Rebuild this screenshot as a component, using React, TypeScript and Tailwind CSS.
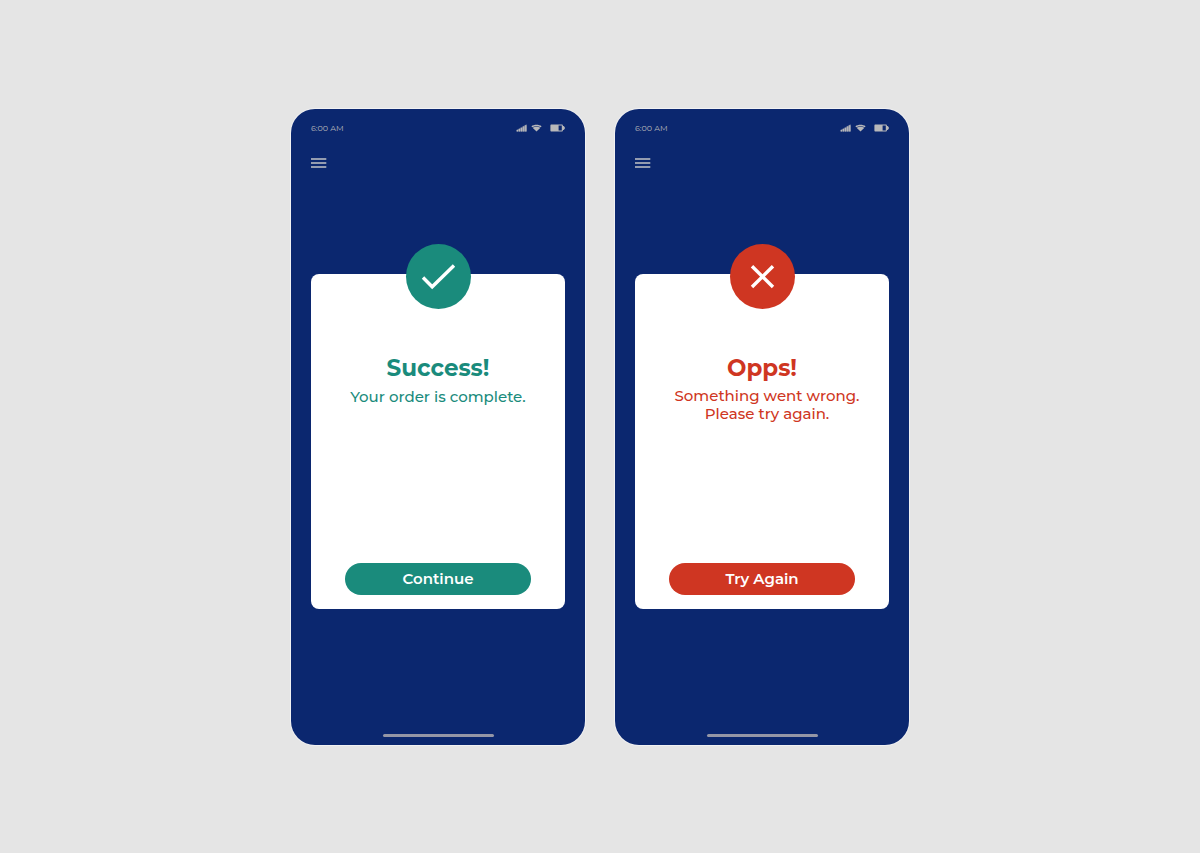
import type { ReactNode } from "react";

type Screen = {
  title: string;
  lines: string[];
  action: string;
  fill: string;
  text: string;
  note: string;
  icon: ReactNode;
};

const screens: Screen[] = [
  {
    title: "Success!",
    lines: ["Your order is complete."],
    action: "Continue",
    fill: "bg-[#1a8b7c]",
    text: "text-[#1a8b7c]",
    note: "leading-5",
    icon: <path d="M17 33.5 L26.2 42.8 L48 21.5" />,
  },
  {
    title: "Opps!",
    lines: ["Something went wrong.", "Please try again."],
    action: "Try Again",
    fill: "bg-[#cf3622]",
    text: "text-[#cf3622]",
    note: "leading-[18px] pl-[10px]",
    icon: <path d="M22 22.3 L43 43 M43 22.3 L22 43" />,
  },
];

function StatusBar() {
  return (
    <div className="flex h-4 items-center justify-between text-[#b8b8ba]">
      <span className="text-[8px] leading-4">6:00 AM</span>
      <div className="flex items-center">
        <svg width="11" height="8" viewBox="0 0 11 8" className="mr-1" fill="currentColor">
          <path d="M0.4 7.5 V6 L10.6 0.2 V7.5 Z" opacity="0.6" />
          <path d="M0.8 6h1.3v1.5H0.8z M2.9 5h1.3v2.5H2.9z M5 3.9h1.3v3.6H5z M7.1 2.6h1.3v4.9H7.1z M9.1 1.2h1.4v6.3H9.1z" />
        </svg>
        <svg width="11" height="8" viewBox="0 0 11 8" className="mr-2" fill="currentColor">
          <path d="M0.4 2.3 C3 0.3 8 0.3 10.6 2.3 L9.7 3.3 C7.4 1.8 3.6 1.8 1.3 3.3 Z" />
          <path d="M1.6 3.7 C4 2.3 7 2.3 9.4 3.7 L5.5 7.5 Z" />
        </svg>
        <svg width="15" height="8" viewBox="0 0 15 8" fill="currentColor">
          <path
            fillRule="evenodd"
            d="M1.2 0.4 H12 Q12.9 0.4 12.9 1.4 V2.1 H13.7 L14.8 3.2 V4.8 L13.7 5.9 H12.9 V6.6 Q12.9 7.6 12 7.6 H1.2 Q0.4 7.6 0.4 6.6 V1.4 Q0.4 0.4 1.2 0.4 Z M8.6 1.5 V6.5 H11.8 V1.5 Z"
          />
        </svg>
      </div>
    </div>
  );
}

function Phone({ title, lines, action, fill, text, note, icon }: Screen) {
  return (
    <section className="flex min-h-[636px] w-full max-w-[294px] flex-col rounded-[24px] bg-[#0b276f] px-5 pt-[11px] pb-2 ring-1 ring-[#f1f1f3]">
      <StatusBar />

      <button type="button" aria-label="Menu" className="mt-[19px] flex h-4 w-4 items-center">
        <svg width="16" height="10" viewBox="0 0 16 10" stroke="#c2c3c6" strokeWidth="1.5">
          <path d="M0 1 H15.3 M0 5 H15.3 M0 9 H15.3" />
        </svg>
      </button>

      <div className="mt-[103px] flex min-h-[335px] flex-col items-center rounded-lg bg-white px-[34px] pb-[14px]">
        <div className={`-mt-[30px] h-[65px] w-[65px] shrink-0 rounded-full ${fill}`}>
          <svg viewBox="0 0 65 65" fill="none" stroke="#fff" strokeWidth="3.4">
            {icon}
          </svg>
        </div>
        <h2 className={`mt-11 text-[23px] leading-[30px] font-bold ${text}`}>{title}</h2>
        <p className={`mt-1 text-center text-[15px] font-medium whitespace-nowrap ${text} ${note}`}>
          {lines.map((line) => (
            <span key={line} className="block">
              {line}
            </span>
          ))}
        </p>
        <button
          type="button"
          className={`mt-auto h-8 w-full rounded-2xl text-[15px] leading-8 font-semibold text-white ${fill}`}
        >
          {action}
        </button>
      </div>

      <div className="mt-auto h-[3px] w-[111px] self-center rounded-full bg-[#9496a6]" />
    </section>
  );
}

export default function App() {
  return (
    <main className="flex min-h-screen flex-wrap items-center justify-center gap-[30px] bg-[#e5e5e5] font-['Montserrat','Inter',sans-serif]">
      {screens.map((screen) => (
        <Phone key={screen.title} {...screen} />
      ))}
    </main>
  );
}
